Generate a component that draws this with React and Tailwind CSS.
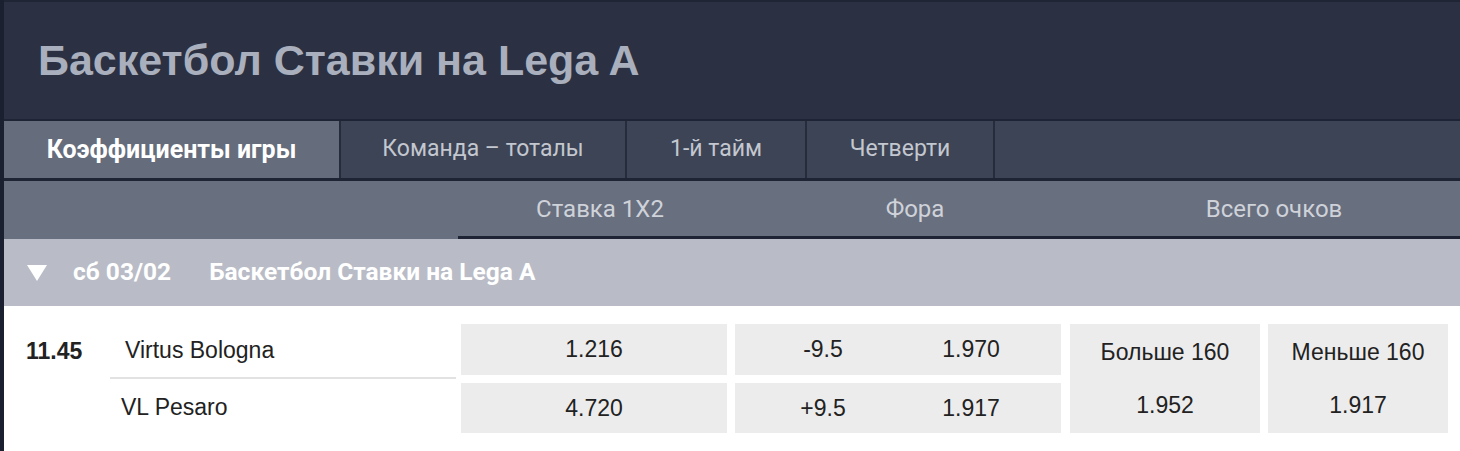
import React from "react";

// данные матча
const TABS = ["Коэффициенты игры", "Команда – тоталы", "1-й тайм", "Четверти"];
const TAB_W = ["w-[337px]", "w-[286px]", "w-[180px]", "w-[188px]"];

function Cell({ className = "", children }) {
  return (
    <div className={`bg-[#ececec] flex items-center justify-center text-[23px] text-[#222] ${className}`}>
      {children}
    </div>
  );
}

export default function App() {
  return (
    <div className="w-[1460px] h-[451px] overflow-hidden bg-white border-l-4 border-[#1a2030] font-['Liberation_Sans',Arial,sans-serif]">
      {/* заголовок */}
      <div className="h-[119px] bg-[#2b3142] border-t-2 border-[#1f2534] flex items-center pl-[34px]">
        <h1 className="text-[43px] font-bold text-[#a9afbc] leading-none">Баскетбол Ставки на Lega A</h1>
      </div>

      {/* вкладки */}
      <div className="h-[62px] bg-[#3d4455] border-t-2 border-b-[3px] border-[#1e2434] flex font-['Roboto',sans-serif]">
        {TABS.map((t, i) => (
          <div
            key={t}
            className={`${TAB_W[i]} border-r-2 border-[#262c3b] flex items-center justify-center ${
              i === 0 ? "bg-[#656c7c] text-white font-bold text-[25px]" : "text-[#c3c7cf] text-[23px]"
            }`}
          >
            {t}
          </div>
        ))}
      </div>

      {/* колонки */}
      <div className="h-[58px] bg-[#686f7f] flex text-[24px] text-[#cfd2d9] font-['Roboto',sans-serif]">
        <div className="w-[454px]" />
        <div className="flex-1 flex border-b-[3px] border-[#1e2434]">
          <div className="w-[284px] flex items-center justify-center">Ставка 1X2</div>
          <div className="w-[346px] flex items-center justify-center">Фора</div>
          <div className="flex-1 flex items-center justify-center">Всего очков</div>
        </div>
      </div>

      {/* группа */}
      <div className="h-[67px] bg-[#b9bcc6] flex items-center text-white font-bold text-[24.5px] font-['Roboto',sans-serif]">
        <svg width="20" height="16" viewBox="0 0 20 16" className="ml-[23px]">
          <polygon points="0,0 20,0 10,16" fill="white" />
        </svg>
        <span className="ml-[26px]">сб 03/02</span>
        <span className="ml-[38px]">Баскетбол Ставки на Lega A</span>
      </div>

      {/* матч */}
      <div className="flex pt-[18px]">
        <div className="w-[106px] pl-[22px] pt-[10px] text-[23px] font-bold text-[#222]">11.45</div>
        <div className="w-[346px] flex flex-col text-[23px] text-[#222]">
          <div className="h-[55px] flex items-center pl-[15px] border-b-2 border-[#e2e2e2]">Virtus Bologna</div>
          <div className="h-[57px] flex items-center pl-[11px]">VL Pesaro</div>
        </div>
        <div className="ml-[5px] w-[266px] flex flex-col gap-[8px]">
          <Cell className="h-[51px]">1.216</Cell>
          <Cell className="h-[50px]">4.720</Cell>
        </div>
        <div className="ml-[8px] w-[326px] flex flex-col gap-[8px]">
          <Cell className="h-[51px] justify-start">
            <span className="w-[176px] text-center">-9.5</span>
            <span className="w-[120px] text-center">1.970</span>
          </Cell>
          <Cell className="h-[50px] justify-start">
            <span className="w-[176px] text-center">+9.5</span>
            <span className="w-[120px] text-center">1.917</span>
          </Cell>
        </div>
        <Cell className="ml-[9px] w-[190px] h-[109px] flex-col gap-[18px]">
          <span>Больше 160</span>
          <span>1.952</span>
        </Cell>
        <Cell className="ml-[8px] w-[180px] h-[109px] flex-col gap-[18px]">
          <span>Меньше 160</span>
          <span>1.917</span>
        </Cell>
      </div>
    </div>
  );
}
